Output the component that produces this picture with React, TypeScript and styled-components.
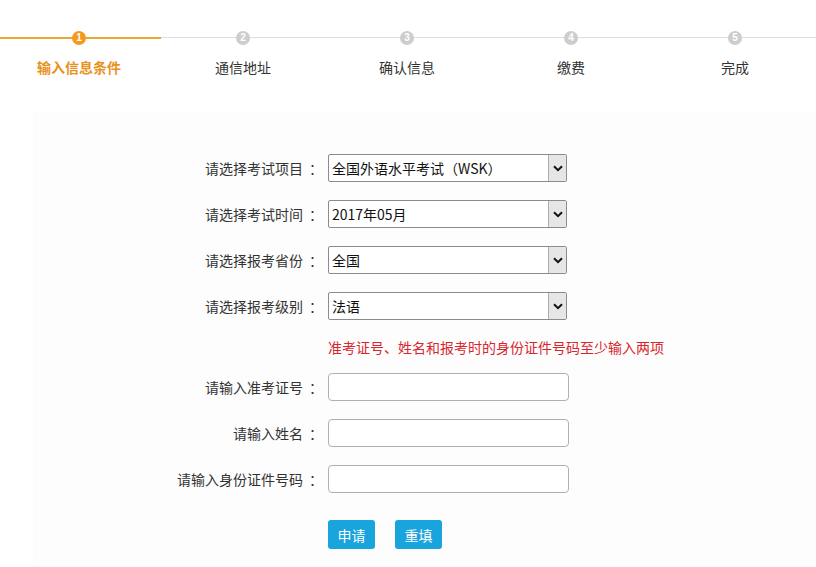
import { FC } from 'react';
import styled, { createGlobalStyle } from 'styled-components';

const GlobalStyle = createGlobalStyle`
    html, body {
        margin: 0;
        padding: 0;
        background: #ffffff;
    }
    body {
        font-family: 'Noto Sans CJK SC', 'Microsoft YaHei', 'Liberation Sans', sans-serif;
        font-size: 14px;
        color: #333;
    }
`;

const steps = ['输入信息条件', '通信地址', '确认信息', '缴费', '完成'];

const selects = [
    { label: '请选择考试项目', value: '全国外语水平考试（WSK）' },
    { label: '请选择考试时间', value: '2017年05月' },
    { label: '请选择报考省份', value: '全国' },
    { label: '请选择报考级别', value: '法语' },
];

const inputs = ['请输入准考证号', '请输入姓名', '请输入身份证件号码'];

const Chevron: FC = () => (
    <svg width='10' height='7' viewBox='0 0 10 7'>
        <path
            d='M1 1.2 L5 5.2 L9 1.2'
            fill='none'
            stroke='#111'
            strokeWidth='2'
        />
    </svg>
);

const App: FC = () => {
    return (
        <Page>
            <GlobalStyle />
            <Steps>
                {steps.map((s, i) => (
                    <Step key={s} $active={i === 0}>
                        <Dot $active={i === 0}>{i + 1}</Dot>
                        <StepLabel $active={i === 0}>{s}</StepLabel>
                    </Step>
                ))}
            </Steps>
            <Panel>
                <Form>
                    {selects.map((s) => (
                        <Row key={s.label}>
                            <Label>
                                {s.label}
                                <Colon>：</Colon>
                            </Label>
                            <SelectBox>
                                <SelectText>{s.value}</SelectText>
                                <ArrowBox>
                                    <Chevron />
                                </ArrowBox>
                            </SelectBox>
                        </Row>
                    ))}
                    <HintRow>
                        <Label />
                        <Hint>准考证号、姓名和报考时的身份证件号码至少输入两项</Hint>
                    </HintRow>
                    {inputs.map((l) => (
                        <Row key={l}>
                            <Label>
                                {l}
                                <Colon>：</Colon>
                            </Label>
                            <TextInput type='text' />
                        </Row>
                    ))}
                    <ButtonRow>
                        <Label />
                        <Buttons>
                            <Button>申请</Button>
                            <Button>重填</Button>
                        </Buttons>
                    </ButtonRow>
                </Form>
            </Panel>
        </Page>
    );
};

const Page = styled.div`
    width: 816px;
    height: 567px;
    overflow: hidden;
    background: #fff;
`;

const Steps = styled.div`
    display: grid;
    grid-template-columns: repeat(5, 1fr);
    margin-left: -3px;
    width: 820px;
    height: 112px;
`;

const Step = styled.div<{ $active: boolean }>`
    position: relative;
    display: flex;
    flex-direction: column;
    align-items: center;
    padding-top: 31px;
    &::before {
        content: '';
        position: absolute;
        left: 0;
        right: 0;
        top: 37px;
        height: ${(p) => (p.$active ? '2px' : '1px')};
        background: ${(p) => (p.$active ? '#e9a834' : '#dedede')};
    }
`;

const Dot = styled.div<{ $active: boolean }>`
    position: relative;
    z-index: 1;
    width: 14px;
    height: 14px;
    border-radius: 50%;
    background: ${(p) => (p.$active ? '#f39a1e' : '#cdcdcd')};
    color: #fff;
    font-family: 'Liberation Sans', sans-serif;
    font-size: 10px;
    font-weight: bold;
    line-height: 14px;
    text-align: center;
`;

const StepLabel = styled.div<{ $active: boolean }>`
    margin-top: 12px;
    line-height: 20px;
    font-size: 14px;
    color: ${(p) => (p.$active ? '#e8921e' : '#333')};
    font-weight: ${(p) => (p.$active ? 'bold' : 'normal')};
`;

const Panel = styled.div`
    margin-left: 33px;
    height: 455px;
    background: #fdfdfd;
    padding-top: 42px;
    box-sizing: border-box;
`;

const Form = styled.div`
    display: flex;
    flex-direction: column;
    margin-left: 135px;
`;

const Row = styled.div`
    display: grid;
    grid-template-columns: 150px 242px;
    column-gap: 10px;
    align-items: center;
    height: 28px;
    margin-bottom: 18px;
`;

const HintRow = styled(Row)`
    height: 20px;
    margin-top: -1px;
    margin-bottom: 16px;
`;

const ButtonRow = styled(Row)`
    height: 29px;
    margin-top: 9px;
`;

const Label = styled.div`
    display: flex;
    justify-content: flex-end;
    align-items: center;
    color: #333;
    font-size: 14px;
    white-space: nowrap;
`;

const Colon = styled.span`
    display: inline-block;
    width: 15px;
    overflow: visible;
    text-indent: 6px;
`;

const SelectBox = styled.div`
    display: flex;
    align-items: stretch;
    width: 239px;
    height: 28px;
    box-sizing: border-box;
    border: 1px solid #8c8c8c;
    border-radius: 2px;
    background: #fff;
`;

const SelectText = styled.div`
    flex: 1;
    padding-left: 3px;
    line-height: 26px;
    color: #111;
    font-size: 14px;
    white-space: nowrap;
    overflow: hidden;
`;

const ArrowBox = styled.div`
    width: 17px;
    display: flex;
    align-items: center;
    justify-content: center;
    background: #e6e6e6;
    border-left: 1px solid #adadad;
`;

const Hint = styled.div`
    color: #d8262e;
    font-size: 14px;
    line-height: 20px;
    white-space: nowrap;
`;

const TextInput = styled.input`
    width: 241px;
    height: 28px;
    box-sizing: border-box;
    border: 1px solid #b0b0b0;
    border-radius: 4px;
    background: #fff;
    outline: none;
    padding: 0 6px;
    font-size: 14px;
`;

const Buttons = styled.div`
    display: flex;
    gap: 20px;
`;

const Button = styled.button`
    width: 47px;
    height: 29px;
    border: none;
    border-radius: 3px;
    background: #1aa4dd;
    color: #fff;
    font-family: inherit;
    font-size: 14px;
    padding: 0;
    cursor: pointer;
`;

export default App;
